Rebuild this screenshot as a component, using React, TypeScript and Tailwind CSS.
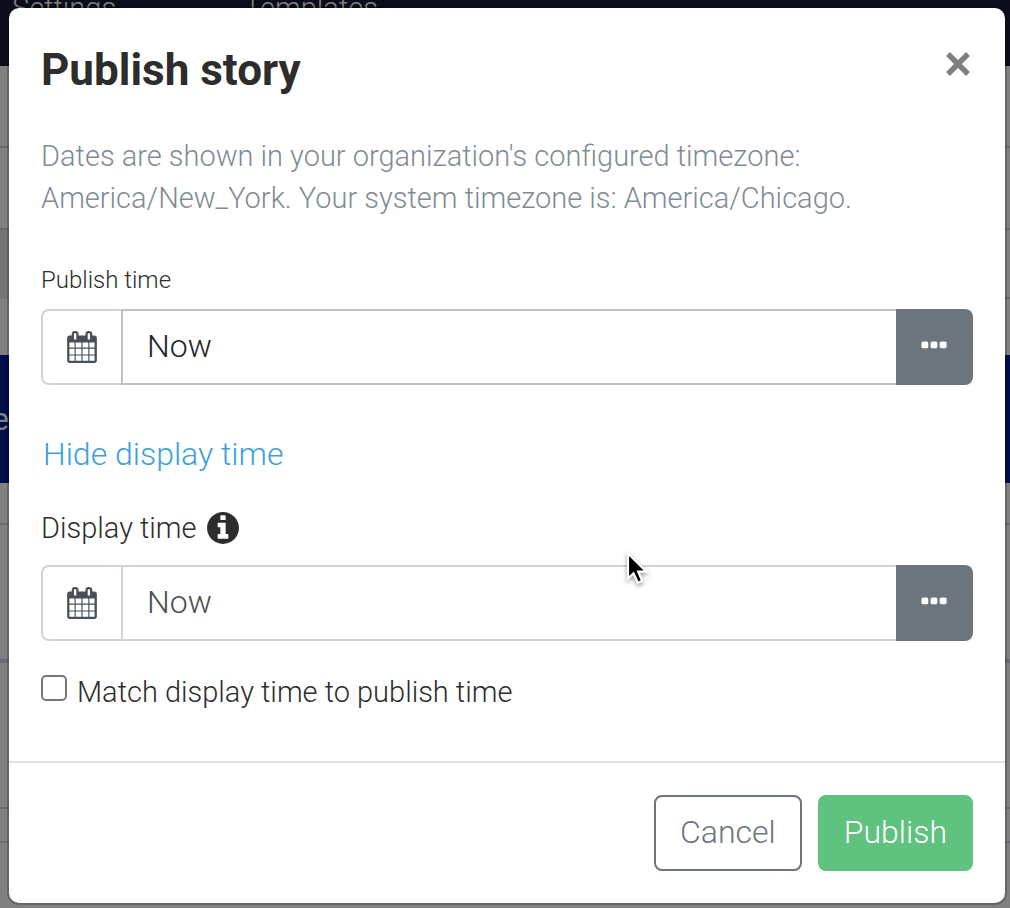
import React, { useState } from "react";

function CalendarIcon() {
  return (
    <svg viewBox="0 0 1792 1792" className="size-8 fill-[#495057]" aria-hidden="true">
      <path d="M192 1664h288v-288h-288v288zm352 0h320v-288h-320v288zm-352-352h288v-320h-288v320zm352 0h320v-320h-320v320zm-352-384h288v-288h-288v288zm736 736h320v-288h-320v288zm-384-736h320v-288h-320v288zm768 736h288v-288h-288v288zm-384-352h320v-320h-320v320zm-352-864v-288q0-13-9.500-22.500t-22.500-9.500h-64q-13 0-22.500 9.500t-9.500 22.500v288q0 13 9.500 22.500t22.500 9.500h64q13 0 22.500-9.500t9.500-22.500zm736 864h288v-320h-288v320zm-384-384h320v-288h-320v288zm384 0h288v-288h-288v288zm32-480v-288q0-13-9.500-22.500t-22.500-9.500h-64q-13 0-22.500 9.500t-9.500 22.500v288q0 13 9.500 22.500t22.500 9.500h64q13 0 22.500-9.500t9.500-22.500zm384-64v1280q0 52-38 90t-90 38h-1408q-52 0-90-38t-38-90v-1280q0-52 38-90t90-38h128v-96q0-66 47-113t113-47h64q66 0 113 47t47 113v96h384v-96q0-66 47-113t113-47h64q66 0 113 47t47 113v96h128q52 0 90 38t38 90z" />
    </svg>
  );
}

function EllipsisIcon() {
  return (
    <svg viewBox="0 0 1792 1792" className="size-8 fill-white" aria-hidden="true">
      <path d="M576 736v192q0 40-28 68t-68 28h-192q-40 0-68-28t-28-68v-192q0-40 28-68t68-28h192q40 0 68 28t28 68zm512 0v192q0 40-28 68t-68 28h-192q-40 0-68-28t-28-68v-192q0-40 28-68t68-28h192q40 0 68 28t28 68zm512 0v192q0 40-28 68t-68 28h-192q-40 0-68-28t-28-68v-192q0-40 28-68t68-28h192q40 0 68 28t28 68z" />
    </svg>
  );
}

function InfoIcon() {
  return (
    <svg viewBox="128 128 1536 1536" className="size-8 fill-[#2d2d2d]" aria-hidden="true">
      <path d="M1152 1376v-160q0-14-9-23t-23-9h-96v-512q0-14-9-23t-23-9h-320q-14 0-23 9t-9 23v160q0 14 9 23t23 9h96v320h-96q-14 0-23 9t-9 23v160q0 14 9 23t23 9h448q14 0 23-9t9-23zm-128-896v-160q0-14-9-23t-23-9h-192q-14 0-23 9t-9 23v160q0 14 9 23t23 9h192q14 0 23-9t9-23zm640 416q0 209-103 385.500t-279.500 279.500-385.500 103-385.500-103-279.500-279.500-103-385.500 103-385.500 279.500-279.500 385.500-103 385.500 103 279.500 279.500 103 385.500z" />
    </svg>
  );
}

function PageBehind() {
  return (
    <div className="min-h-screen bg-[#808080]" aria-hidden="true">
      <div className="flex h-[66px] gap-32 bg-[#0b0d1c] px-3 text-[29px] leading-4 font-light text-[#808080]">
        <span>Settings</span>
        <span>Templates</span>
      </div>
      <div className="h-[82px] border-b-2 border-[#696969]" />
      <div className="h-[82px] border-b-2 border-[#696969]" />
      <div className="flex h-[69px]">
        <div className="flex-1 bg-[#757575]" />
        <div className="flex-1 border-b-2 border-[#696969]" />
      </div>
      <div className="h-14" />
      <div className="flex h-32 items-center bg-[#020d4d] text-[32px] text-[#808080]">
        <span className="-ml-2">e</span>
      </div>
      <div className="h-[42px] border-b-2 border-[#696c76]" />
      <div className="h-[138px] border-b-4 border-[#696c76]" />
      <div className="h-[146px] border-b-2 border-[#696c76]" />
      <div className="h-[34px] border-b-2 border-[#696c76]" />
    </div>
  );
}

type TimeFieldProps = {
  id: string;
  value: string;
  onChange: (value: string) => void;
  inputClass: string;
};

function TimeField({ id, value, onChange, inputClass }: TimeFieldProps) {
  return (
    <div className="flex h-[76px]">
      <label
        htmlFor={id}
        aria-label="Pick a date"
        className="flex w-20 items-center justify-center rounded-l-lg border-2 border-r-0 border-[#ced4da]"
      >
        <CalendarIcon />
      </label>
      <input
        id={id}
        type="text"
        value={value}
        onChange={(e) => onChange(e.target.value)}
        className={`min-w-0 flex-1 border-2 border-r-0 bg-white px-6 pb-0.5 text-[32px] font-light outline-none ${inputClass}`}
      />
      <button
        type="button"
        aria-label="More options"
        className="flex w-[77px] items-center justify-center rounded-r-lg bg-[#6c757d] pr-0.5 pb-0.5"
      >
        <EllipsisIcon />
      </button>
    </div>
  );
}

export default function App() {
  const [publishTime, setPublishTime] = useState("Now");
  const [displayTime, setDisplayTime] = useState("Now");
  const [match, setMatch] = useState(false);

  return (
    <div className="relative font-[Roboto,sans-serif] text-[#2d2d2d]">
      <PageBehind />
      <div className="absolute inset-0 pt-1.5 pr-[3px] pl-[7px]">
        <div
          role="dialog"
          aria-labelledby="dialog-title"
          className="rounded-xl border-2 border-black/20 bg-white bg-clip-padding"
        >
          <header className="flex items-start justify-between px-8 pt-8">
            <h1 id="dialog-title" className="text-[44px] leading-[60px] font-bold">
              Publish story
            </h1>
            <button type="button" aria-label="Close" className="mt-[11px] mr-0.5">
              <svg viewBox="0 0 26 26" className="size-[26px]" aria-hidden="true">
                <path d="M3 3L23 23M23 3L3 23" stroke="#7f7f7f" strokeWidth="5.400" fill="none" />
              </svg>
            </button>
          </header>

          <div className="px-8 pt-[35px] pb-12">
            <p className="text-[29px] leading-[42px] font-light text-[#808b96]">
              Dates are shown in your organization's configured timezone: America/New_York. Your
              system timezone is: America/Chicago.
            </p>

            <label
              htmlFor="publish-time"
              className="mt-[43px] mb-[11px] block text-2xl leading-9 font-light"
            >
              Publish time
            </label>
            <TimeField
              id="publish-time"
              value={publishTime}
              onChange={setPublishTime}
              inputClass="border-[#c0c0c0] text-[#212529]"
            />

            <button
              type="button"
              className="mt-[45px] ml-0.5 block text-[32px] leading-[48px] font-light text-[#3e9fdd]"
            >
              Hide display time
            </button>

            <div className="mt-[29px] mb-4 flex items-center gap-2.5">
              <label htmlFor="display-time" className="text-[29px] leading-[42px] font-light">
                Display time
              </label>
              <InfoIcon />
            </div>
            <TimeField
              id="display-time"
              value={displayTime}
              onChange={setDisplayTime}
              inputClass="border-[#ced4da] text-[#495057]"
            />

            <label className="mt-[30px] flex items-center gap-2.5 text-[29px] leading-[42px] font-light">
              <input
                type="checkbox"
                checked={match}
                onChange={(e) => setMatch(e.target.checked)}
                className="mb-2 size-[26px] appearance-none rounded-[5px] border-2 border-[#767676] bg-white checked:bg-[#3e9fdd]"
              />
              Match display time to publish time
            </label>
          </div>

          <footer className="flex justify-end gap-4 border-t-2 border-[#dee2e6] p-8">
            <button
              type="button"
              className="h-[76px] rounded-lg border-2 border-[#6c757d] px-6 pb-0.5 text-[32px] font-light text-[#6c757d]"
            >
              Cancel
            </button>
            <button
              type="button"
              className="h-[76px] rounded-lg border-2 border-[#5fc27e] bg-[#5fc27e] px-6 pb-0.5 text-[32px] font-light text-white"
            >
              Publish
            </button>
          </footer>
        </div>
      </div>

      <svg
        viewBox="0 0 24 36"
        className="absolute top-[550px] left-[625px] h-9 w-6 drop-shadow-[0_2px_2px_rgba(0,0,0,0.4)]"
        aria-hidden="true"
      >
        <path
          d="M3 3.500V28.500L8.500 23.300L12.800 32.800L17.200 31L13.200 21.600H21.500Z"
          fill="#000"
          stroke="#fff"
          strokeWidth="2.200"
        />
      </svg>
    </div>
  );
}
